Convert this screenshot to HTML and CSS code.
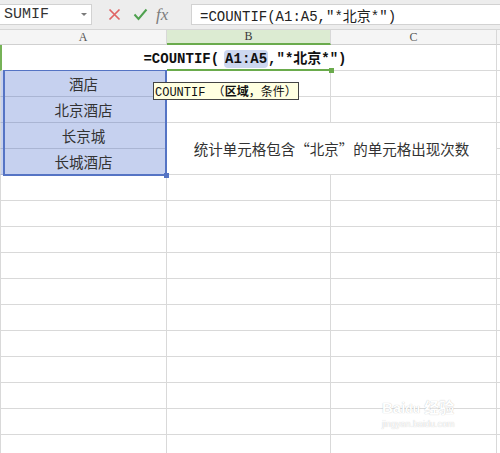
FILE: index.html
```html
<!DOCTYPE html>
<html lang="zh-CN">
<head>
<meta charset="utf-8">
<title>COUNTIF</title>
<link rel="stylesheet" href="styles.css">
</head>
<body>
<div class="toolbar">
  <div class="namebox"><span>SUMIF</span><span class="caret"></span></div>
  <div class="btns">
    <svg class="ico-x" width="13" height="13" viewBox="0 0 13 13"><path d="M1.5 1.5 L11.5 11.5 M11.5 1.5 L1.5 11.5" stroke="#e06464" stroke-width="1.7" fill="none"/></svg>
    <svg class="ico-ok" width="15" height="13" viewBox="0 0 15 13"><path d="M1.5 6.5 L5.5 11 L13.5 1.5" stroke="#4fa14f" stroke-width="2" fill="none"/></svg>
    <span class="fx">fx</span>
  </div>
  <div class="fbar">=COUNTIF(A1:A5,"*北京*")</div>
</div>
<div class="sheet">
  <div class="hd">A</div><div class="hd hd-on">B</div><div class="hd">C</div><div class="hd hd-pad"></div>

  <div class="c first r1a"></div><div class="c edit"><span class="etext">=COUNTIF(<span class="ref">A1:A5</span>,"*北京*")</span></div><div class="c"></div><div class="c pad"></div>

  <div class="c first sel">酒店</div><div class="c"></div><div class="c"></div><div class="c pad"></div>
  <div class="c first sel">北京酒店</div><div class="c"></div><div class="c"></div><div class="c pad"></div>
  <div class="c first sel">长京城</div><div class="c merged">统计单元格包含“北京”的单元格出现次数</div><div class="c pad"></div>
  <div class="c first sel">长城酒店</div><div class="c pad"></div>

  <div class="c first"></div><div class="c"></div><div class="c"></div><div class="c pad"></div>
  <div class="c first"></div><div class="c"></div><div class="c"></div><div class="c pad"></div>
  <div class="c first"></div><div class="c"></div><div class="c"></div><div class="c pad"></div>
  <div class="c first"></div><div class="c"></div><div class="c"></div><div class="c pad"></div>
  <div class="c first"></div><div class="c"></div><div class="c"></div><div class="c pad"></div>
  <div class="c first"></div><div class="c"></div><div class="c"></div><div class="c pad"></div>
  <div class="c first"></div><div class="c"></div><div class="c"></div><div class="c pad"></div>
  <div class="c first"></div><div class="c"></div><div class="c"></div><div class="c pad"></div>
  <div class="c first"></div><div class="c"></div><div class="c"></div><div class="c pad"></div>
  <div class="c first"></div><div class="c"></div><div class="c"></div><div class="c pad"></div>
  <div class="c first"></div><div class="c"></div><div class="c"></div><div class="c pad"></div>

  <div class="selection"></div>
  <div class="tip">COUNTIF （<b>区域</b>，条件）</div>
  <div class="watermark"><div class="wm-top">Bai<span class="paw">du</span> 经验</div><div class="wm-url">jingyan.baidu.com</div></div>
</div>
</body>
</html>
```
FILE: styles.css
```css
body {
  margin: 0;
  width: 500px;
  height: 453px;
  overflow: hidden;
  background: #fff;
  font-family: "Noto Sans CJK SC", "Noto Sans", sans-serif;
}

.toolbar {
  height: 29px;
  border-bottom: 1px solid #d6d6d6;
  background: #ededed;
  display: flex;
  align-items: center;
}

.namebox {
  box-sizing: border-box;
  width: 92px;
  height: 21px;
  background: #fff;
  border: 1px solid #d2d2d2;
  border-left: none;
  display: flex;
  align-items: center;
  justify-content: space-between;
  padding: 0 3px 0 4px;
  font: 15px "Liberation Mono", monospace;
  color: #333;
}

.caret {
  width: 0;
  height: 0;
  border-left: 3px solid transparent;
  border-right: 3px solid transparent;
  border-top: 3px solid #7a7a7a;
  margin-right: 1px;
}

.btns {
  width: 99px;
  height: 100%;
  display: flex;
  align-items: center;
}

.ico-x { margin-left: 16px; }
.ico-ok { margin-left: 12px; }

.fx {
  margin-left: 8px;
  font: italic 17px "Liberation Serif", serif;
  color: #7c7c7c;
  line-height: 1;
}

.fbar {
  flex: 1;
  height: 21px;
  box-sizing: border-box;
  background: #fff;
  border: 1px solid #d2d2d2;
  border-right: none;
  padding-left: 8px;
  display: flex;
  align-items: center;
  font: 14px "Liberation Mono", "Noto Sans CJK SC", monospace;
  color: #222;
  white-space: nowrap;
}

.sheet {
  position: relative;
  display: grid;
  grid-template-columns: 167px 164px 166px 3px;
  grid-template-rows: 15px;
  grid-auto-rows: 26px;
}

.hd {
  box-sizing: border-box;
  background: #f5f5f5;
  border-right: 1px solid #d8d8d8;
  border-bottom: 1px solid #d0d0d0;
  display: flex;
  align-items: center;
  justify-content: center;
  font: 12px "Liberation Serif", serif;
  color: #555;
}

.hd-on {
  background: #dcebd2;
  border-bottom: 2px solid #6aab4c;
  color: #3a3a3a;
}

.hd-pad { border-right: none; }

.c {
  box-sizing: border-box;
  min-width: 0;
  border-right: 1px solid #d9d9d9;
  border-bottom: 1px solid #d9d9d9;
  background: #fff;
  display: flex;
  align-items: center;
  justify-content: center;
  font-size: 14.5px;
  color: #333;
  white-space: nowrap;
}

.c.first { border-left: 1px solid #d9d9d9; }
.c.pad { border-right: none; }

.r1a {
  border-right: none;
}
.c.first.r1a { border-left: 2px solid #76b257; }

.edit {
  position: relative;
  z-index: 1;
  border-right: none;
  border-bottom: 2px solid #6aab4c;
  font: bold 14px "Liberation Mono", "Noto Sans CJK SC", monospace;
  color: #111;
}

.etext { margin-left: -8px; }

.edit::after {
  content: "";
  position: absolute;
  right: -3px;
  bottom: -4px;
  width: 5px;
  height: 5px;
  background: #6aab4c;
}

.ref {
  background: #ccd7ef;
  border-radius: 4px;
  padding: 1px 1px;
  margin-left: 5px;
}

.sel {
  background: #c6d1ef;
  border-bottom-color: #aab5d3;
}

.merged {
  grid-column: span 2;
  grid-row: span 2;
}

.selection {
  position: absolute;
  grid-column: 1 / 2;
  grid-row: 3 / 7;
  top: -1px;
  left: 3px;
  right: 0;
  bottom: -1px;
  border: 2px solid #5574c4;
  border-top-width: 1px;
  z-index: 2;
}

.selection::after {
  content: "";
  position: absolute;
  right: -4px;
  bottom: -4px;
  width: 5px;
  height: 5px;
  background: #5574c4;
}

.tip {
  position: absolute;
  left: 153px;
  top: 52px;
  height: 18px;
  box-sizing: border-box;
  border: 1px solid #444;
  background: #ffffe1;
  padding: 0 1px;
  display: flex;
  align-items: center;
  white-space: nowrap;
  font: 12px "Liberation Mono", "Noto Sans CJK SC", monospace;
  color: #111;
  z-index: 3;
}

.watermark {
  position: absolute;
  left: 382px;
  top: 368px;
  color: #fff;
  text-shadow: 0 0 1px rgba(0, 0, 0, 0.28);
  font-family: "Liberation Sans", "Noto Sans CJK SC", sans-serif;
  z-index: 3;
}

.wm-top {
  font-size: 15px;
  font-weight: bold;
  line-height: 20px;
}

.paw {
  font-size: 12px;
}

.wm-url {
  font-size: 9px;
  line-height: 11px;
}
```
